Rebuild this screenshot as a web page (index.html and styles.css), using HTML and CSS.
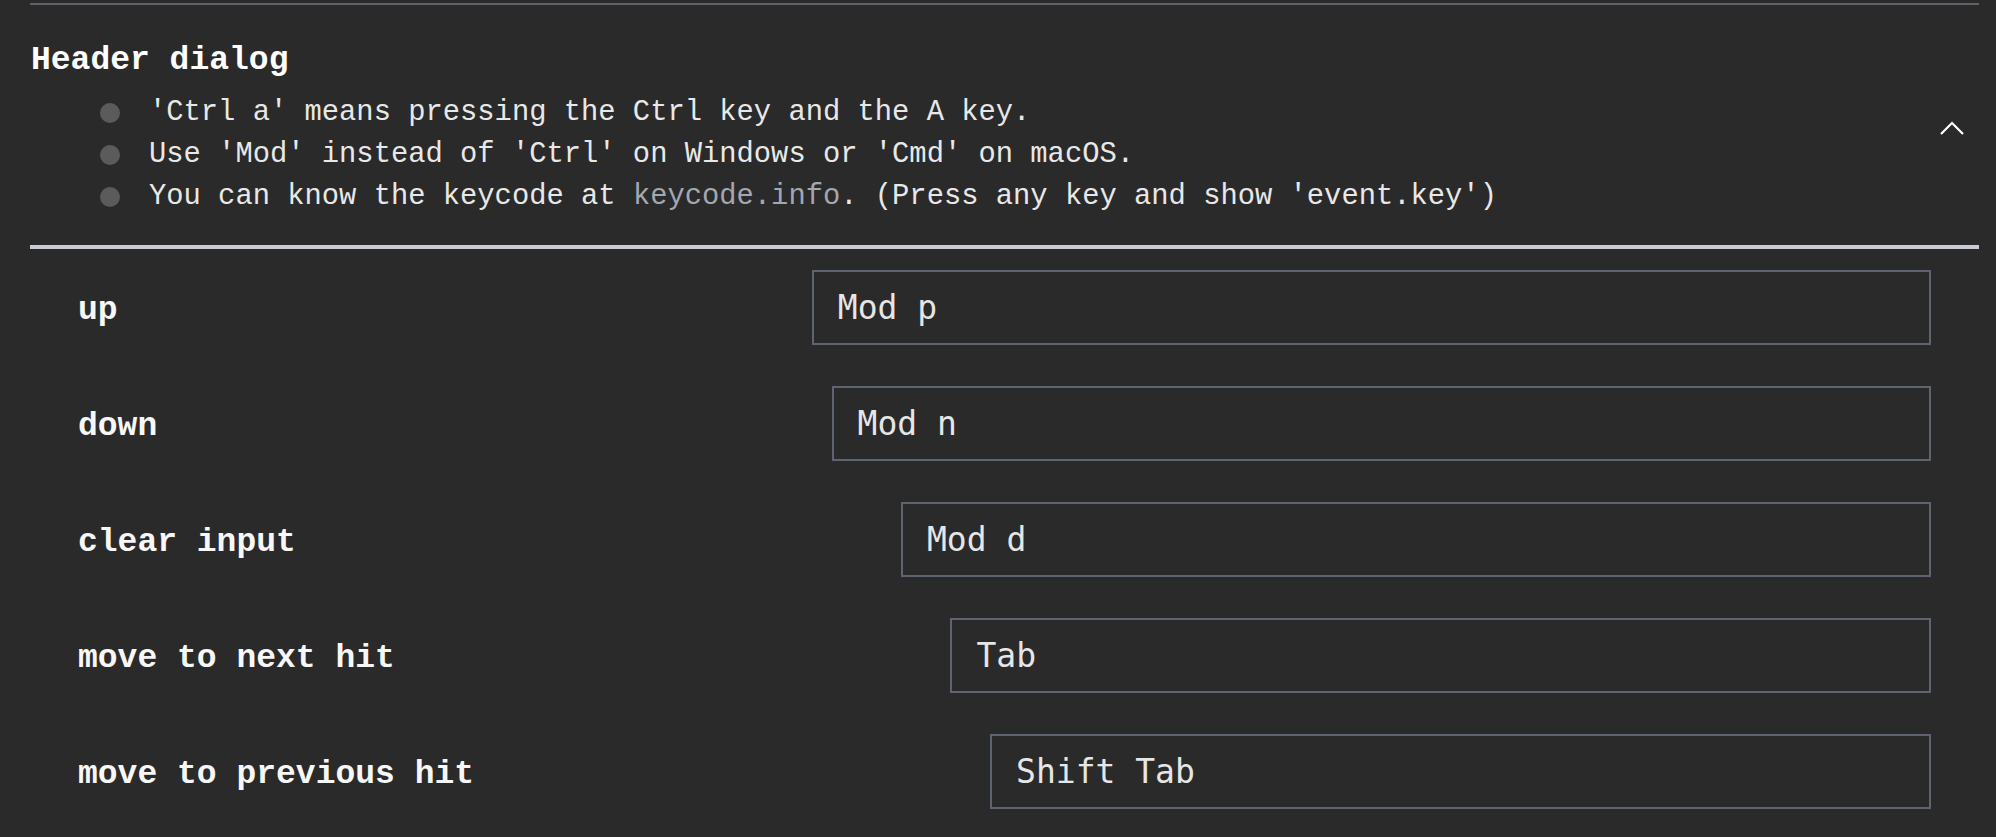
FILE: index.html
```html
<!DOCTYPE html>
<html lang="en">
<head>
    <meta charset="UTF-8">
    <meta name="viewport" content="width=device-width, initial-scale=1.0">
    <title>Keymap settings</title>
    <link rel="stylesheet" href="styles.css">
</head>
<body>
    <div class="settings">
        <div class="divider"></div>

        <!-- Header dialog keymap section -->
        <div class="section-head">
            <div class="head-text">
                <h2 class="section-title">Header dialog</h2>
                <ul class="notes">
                    <li>'Ctrl a' means pressing the Ctrl key and the A key.</li>
                    <li>Use 'Mod' instead of 'Ctrl' on Windows or 'Cmd' on macOS.</li>
                    <li>You can know the keycode at <a href="#">keycode.info</a>. (Press any key and show 'event.key')</li>
                </ul>
            </div>
            <button class="toggle" type="button" aria-label="collapse">
                <svg width="24" height="14" viewBox="0 0 24 14">
                    <polyline points="1,13 12,2 23,13" fill="none" stroke="#ffffff" stroke-width="2.2"/>
                </svg>
            </button>
        </div>

        <div class="keymap">
            <div class="key-row">
                <label class="key-label" for="key-up">up</label>
                <input class="key-input" id="key-up" type="text" value="Mod p">
            </div>
            <div class="key-row">
                <label class="key-label" for="key-down">down</label>
                <input class="key-input" id="key-down" type="text" value="Mod n">
            </div>
            <div class="key-row">
                <label class="key-label" for="key-clear">clear input</label>
                <input class="key-input" id="key-clear" type="text" value="Mod d">
            </div>
            <div class="key-row">
                <label class="key-label" for="key-next">move to next hit</label>
                <input class="key-input" id="key-next" type="text" value="Tab">
            </div>
            <div class="key-row">
                <label class="key-label" for="key-prev">move to previous hit</label>
                <input class="key-input" id="key-prev" type="text" value="Shift Tab">
            </div>
        </div>
    </div>
</body>
</html>
```

FILE: styles.css
```css
body {
    margin: 0;
    padding: 0;
    background-color: #2a2a2a;
    color: #eeeeee;
    font-family: "Liberation Mono", "DejaVu Sans Mono", monospace;
}
.settings {
    padding: 0 17px 0 30px;
}
.divider {
    margin-top: 3px;
    height: 2px;
    background-color: #5e626b;
}

/* collapsible section header */
.section-head {
    display: flex;
    padding: 36px 0 27px 0;
    border-bottom: 4px solid #c9ccd6;
}
.head-text {
    flex: 1;
}
.section-title {
    margin: 0 0 0 1px;
    font-size: 33px;
    line-height: 40px;
    font-weight: bold;
    color: #ffffff;
}
.notes {
    margin: 11px 0 0 0;
    padding: 0 0 0 70px;
    list-style-type: none;
    font-size: 28.8px;
    line-height: 42px;
    color: #e8e8e8;
}
.notes li {
    display: flex;
    align-items: center;
    white-space: pre;
}
.notes li::before {
    content: "";
    flex: none;
    width: 20px;
    height: 20px;
    margin-right: 29px;
    border-radius: 50%;
    background-color: #5b5b5b;
}
.notes a {
    color: #a3a7b0;
    text-decoration: none;
}
.toggle {
    align-self: flex-start;
    margin: 80px 15px 0 0;
    padding: 0;
    border: none;
    background: none;
    line-height: 0;
    cursor: pointer;
}

/* keymap rows */
.key-row {
    display: flex;
    align-items: baseline;
    padding: 21px 48px 20px 48px;
}
.key-label {
    flex: 1 1 auto;
    font-size: 33px;
    font-weight: bold;
    color: #f7f7f7;
}
.key-input {
    flex: 1 1 425px;
    min-width: 0;
    height: 75px;
    box-sizing: border-box;
    margin: 0;
    padding: 0 24px;
    border: 2px solid #5f6570;
    border-radius: 0;
    background: transparent;
    color: #e6e6e6;
    font-family: "DejaVu Sans Mono", monospace;
    font-size: 33px;
    outline: none;
}
```
